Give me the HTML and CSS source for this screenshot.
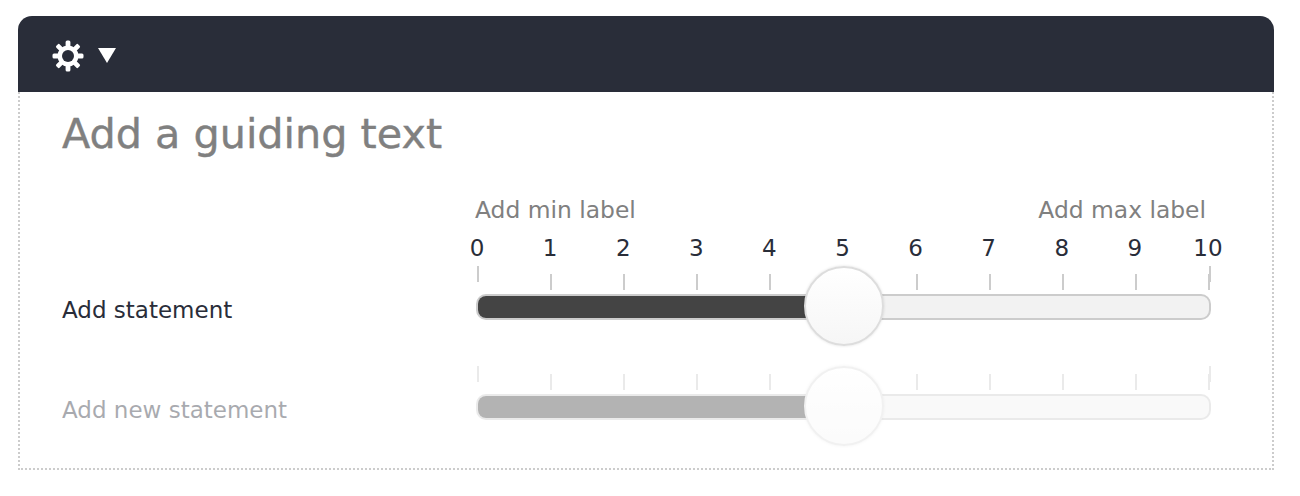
FILE: index.html
```html
<!DOCTYPE html>
<html lang="en">
<head>
  <meta charset="UTF-8">
  <title>Slider question</title>
  <link rel="stylesheet" href="styles.css">
</head>
<body>
  <div class="panel">
    <div class="toolbar">
      <svg class="gear" width="32" height="32" viewBox="0 0 32 32">
        <g fill="#fff">
          <circle cx="16" cy="16" r="10.5"/>
          <rect x="13.6" y="0.5" width="4.8" height="31" rx="1.5"/>
          <rect x="13.6" y="0.5" width="4.8" height="31" rx="1.5" transform="rotate(45 16 16)"/>
          <rect x="13.6" y="0.5" width="4.8" height="31" rx="1.5" transform="rotate(90 16 16)"/>
          <rect x="13.6" y="0.5" width="4.8" height="31" rx="1.5" transform="rotate(135 16 16)"/>
        </g>
        <circle cx="16" cy="16" r="6" fill="#292d39"/>
      </svg>
      <svg class="caret" width="18" height="15" viewBox="0 0 18 15"><path d="M0 0H18L9 15Z" fill="#fff"/></svg>
    </div>
    <div class="content">
      <h1 class="guide">Add a guiding text</h1>
      <div class="scale-head">
        <div class="min-max">
          <span>Add min label</span>
          <span>Add max label</span>
        </div>
        <div class="numbers">
          <span>0</span><span>1</span><span>2</span><span>3</span><span>4</span><span>5</span><span>6</span><span>7</span><span>8</span><span>9</span><span>10</span>
        </div>
      </div>
      <div class="row">
        <div class="statement">Add statement</div>
        <div class="slider">
          <div class="ticks">
            <i class="first"></i><i></i><i></i><i></i><i></i><i></i><i></i><i></i><i></i><i></i><i class="last"></i>
          </div>
          <div class="track"><div class="fill"></div></div>
          <div class="thumb"></div>
        </div>
      </div>
      <div class="row row-new">
        <div class="statement">Add new statement</div>
        <div class="slider">
          <div class="ticks">
            <i class="first"></i><i></i><i></i><i></i><i></i><i></i><i></i><i></i><i></i><i></i><i class="last"></i>
          </div>
          <div class="track"><div class="fill"></div></div>
          <div class="thumb"></div>
        </div>
      </div>
    </div>
  </div>
</body>
</html>
```

FILE: styles.css
```css
body {
  margin: 0;
  padding: 16px 26px 0 18px;
  background: #fff;
  font-family: "DejaVu Sans", sans-serif;
  color: #292d39;
}
.panel {
  width: 1256px;
}
.toolbar {
  height: 76px;
  background: #292d39;
  border-radius: 14px 14px 0 0;
  display: flex;
  align-items: center;
  gap: 14px;
  padding: 4px 0 0 34px;
  box-sizing: border-box;
}
.caret {
  margin-top: -2px;
}
.content {
  height: 378px;
  box-sizing: border-box;
  border: 2px dotted #ccc;
  border-top: none;
  padding: 0 0 0 42px;
}
.guide {
  margin: 0;
  padding-top: 17px;
  font-size: 41.3px;
  line-height: 50px;
  font-weight: normal;
  color: #808080;
  -webkit-text-stroke: 0.4px #808080;
}
.scale-head {
  margin-left: 413px;
  width: 735px;
  padding-top: 37px;
}
.min-max {
  display: flex;
  justify-content: space-between;
  font-size: 23.4px;
  line-height: 28px;
  color: #808080;
  padding-right: 4px;
}
.numbers {
  display: flex;
  justify-content: space-between;
  padding: 10px 2px 0;
  font-size: 23px;
  line-height: 28px;
}
.numbers span {
  width: 0;
  display: flex;
  justify-content: center;
}
.row {
  display: flex;
  align-items: flex-start;
  height: 100px;
}
.row-new {
  opacity: 0.4;
}
.statement {
  width: 414px;
  padding-top: 33px;
  font-size: 23px;
  line-height: 30px;
}
.slider {
  position: relative;
  width: 735px;
  margin-top: 4px;
}
.ticks {
  display: flex;
  justify-content: space-between;
  padding: 0 1px;
  height: 28px;
}
.ticks i {
  width: 2px;
  height: 16px;
  margin-top: 8px;
  background: #ccc;
}
.ticks .first {
  margin-top: 0;
}
.ticks .last {
  box-shadow: 1px -8px 0 #ccc;
}
.track {
  height: 26px;
  box-sizing: border-box;
  border: 2px solid #ccc;
  border-radius: 10px;
  background: #f2f2f2;
  overflow: hidden;
}
.fill {
  width: 50%;
  height: 100%;
  background: #444;
}
.thumb {
  position: absolute;
  left: 328px;
  top: 0;
  width: 80px;
  height: 80px;
  box-sizing: border-box;
  border: 2px solid #ddd;
  border-radius: 50%;
  background: linear-gradient(#fff, #f6f6f6);
  box-shadow: 0 0 3px rgba(0, 0, 0, 0.12);
}
```
